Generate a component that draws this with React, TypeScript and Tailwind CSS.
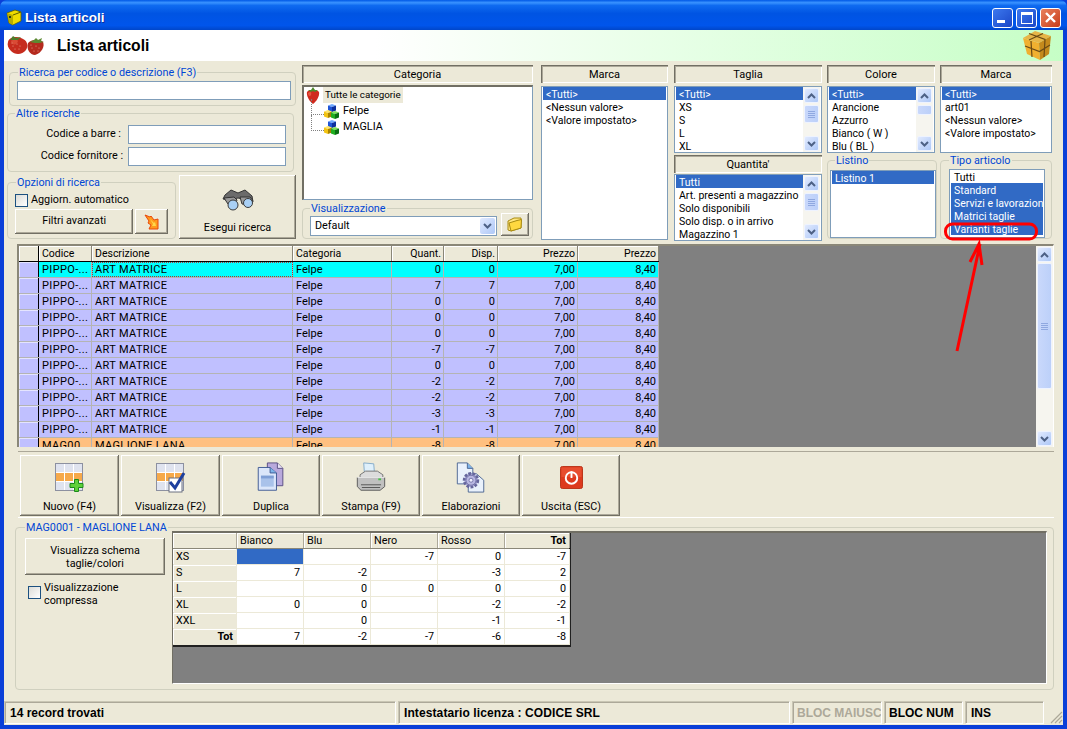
import React from "react";

const raised = "shadow-[inset_-1px_-1px_0_#716f64,inset_1px_1px_0_#fff,inset_-2px_-2px_0_#aca899]";
const headBevel = "shadow-[inset_1px_1px_0_#716f64,inset_2px_2px_0_#aca899,inset_-1px_-1px_0_#fff]";

function Group({ title, className, legendClass, children }: { title: string; className: string; legendClass?: string; children?: React.ReactNode }) {
  return (
    <div className={"relative border border-[#d0d0bf] rounded-[4px] " + className}>
      <span className={"absolute -top-[7px] bg-[#ece9d8] px-px text-[#0046d5] text-[10.8px] leading-[14px] whitespace-nowrap " + (legendClass ?? "left-[8px]")}>{title}</span>
      {children}
    </div>
  );
}

function Head({ label, className }: { label: string; className: string }) {
  return <div className={"h-[18px] pt-[2px] flex items-center justify-center text-[11px] leading-[14px] " + headBevel + " " + className}>{label}</div>;
}

function Chevron({ up }: { up?: boolean }) {
  return (
    <svg width="9" height="6" viewBox="0 0 9 6">
      <path d={up ? "M1 5L4.5 1.5L8 5" : "M1 1L4.5 4.5L8 1"} fill="none" stroke="#4d6185" strokeWidth="2" />
    </svg>
  );
}

function SBtn({ up }: { up?: boolean }) {
  return (
    <div className="w-[15px] h-[15px] shrink-0 rounded-[2px] border border-[#eef3ff] bg-linear-to-br from-[#e1eafe] to-[#aec8f7] flex items-center justify-center">
      <Chevron up={up} />
    </div>
  );
}

function VScroll({ thumb, gap = "mt-[1px]", grip = true }: { thumb: string; gap?: string; grip?: boolean }) {
  return (
    <div className="w-[17px] h-full shrink-0 bg-[#f6f5ef] flex flex-col items-center py-px">
      <SBtn up />
      <div className={"w-[15px] shrink-0 rounded-[2px] border border-[#eef3ff] bg-linear-to-r from-[#c9d8fb] to-[#bcd0f9] flex flex-col gap-px items-center justify-center " + thumb + " " + gap}>
        {grip && (
          <>
            <span className="w-[7px] h-px bg-[#8fa8e0]" />
            <span className="w-[7px] h-px bg-[#8fa8e0]" />
            <span className="w-[7px] h-px bg-[#8fa8e0]" />
            <span className="w-[7px] h-px bg-[#8fa8e0]" />
          </>
        )}
      </div>
      <div className="flex-1" />
      <SBtn />
    </div>
  );
}

function ListItems({ items, selected, pad = "pl-[3px]" }: { items: string[]; selected: number[]; pad?: string }) {
  return (
    <div className="flex-1 min-w-0 overflow-hidden">
      {items.map((t, i) => (
        <div key={i} className={"h-[13px] pt-[2px] leading-[12px] text-[10.5px] whitespace-nowrap overflow-hidden " + pad + " " + (selected.includes(i) ? "bg-[#316ac5] text-white" : "")}>{t}</div>
      ))}
    </div>
  );
}

function ListBox({ items, className, scroll, selected = [0] }: { items: string[]; className: string; scroll?: React.ReactNode; selected?: number[] }) {
  return (
    <div className={"border border-[#7f9db9] bg-white flex px-px overflow-hidden " + className}>
      <ListItems items={items} selected={selected} />
      {scroll}
    </div>
  );
}

function IsoCube({ x, y, top, left, right }: { x: number; y: number; top: string; left: string; right: string }) {
  return (
    <g transform={`translate(${x} ${y})`}>
      <polygon points="4,0 8,1.5 4,3 0,1.5" fill={top} />
      <polygon points="0,1.5 4,3 4,8 0,6.5" fill={left} />
      <polygon points="4,3 8,1.5 8,6.5 4,8" fill={right} />
    </g>
  );
}

function CubesIcon() {
  return (
    <svg width="15" height="15" viewBox="0 0 15 15" className="shrink-0">
      <IsoCube x={4} y={0} top="#6fa8ff" left="#1f55d6" right="#0c2f9c" />
      <IsoCube x={0} y={6} top="#ffe668" left="#f2c313" right="#a98300" />
      <IsoCube x={7} y={7} top="#7fe05a" left="#1fae1f" right="#0a6f12" />
    </svg>
  );
}

function Seeds() {
  return (
    <g fill="#f0a890">
      <circle cx="6" cy="10" r=".55" /><circle cx="10" cy="8" r=".55" /><circle cx="13" cy="10" r=".55" />
      <circle cx="8" cy="13" r=".55" /><circle cx="12" cy="13" r=".55" /><circle cx="5" cy="7" r=".55" />
    </g>
  );
}

function HeaderBerries() {
  return (
    <svg width="38" height="20" viewBox="0 0 38 20" className="ml-[3px] shrink-0">
      <g transform="translate(19 2)">
        <path d="M2 5C6 1 14 1 17 4C19 8 16 15 9 17C4 17 0 11 2 5Z" fill="#b52a1e" />
        <path d="M4 4L8 2L10 0L12 2L16 0L15 3L18 4L13 5L9 5Z" fill="#5c8a32" />
        <Seeds />
      </g>
      <g>
        <path d="M1 6C2 1 9 0 14 2C20 4 22 9 19 14C15 19 8 19 4 15C1 12 0 9 1 6Z" fill="#c62c1e" />
        <path d="M4 5C6 3 10 3 11 5C10 9 5 10 4 5Z" fill="#e0563e" opacity=".75" />
        <path d="M3 4L6 0L9 2L14 1L11 4L7 4Z" fill="#4f7d2b" />
        <Seeds />
      </g>
    </svg>
  );
}

function TreeBerry() {
  return (
    <svg width="14" height="17" viewBox="0 0 14 17" className="ml-px shrink-0">
      <path d="M1 5C3 2 11 2 13 5C14 9 10 15 7 17C4 15 0 9 1 5Z" fill="#cf2a1e" />
      <path d="M2 6C4 4 6 5 5 8C4 10 2 9 2 6Z" fill="#ee6a50" opacity=".7" />
      <path d="M2 3L5 3L7 0L9 3L12 3L9 5L7 4L5 5Z" fill="#4f8a2b" />
    </svg>
  );
}

function GridIcon({ children }: { children?: React.ReactNode }) {
  return (
    <svg width="30" height="30" viewBox="0 0 30 30">
      <rect x="0.5" y="0.5" width="27" height="27" fill="#dfe3ef" stroke="#8c90a0" />
      <rect x="1" y="10" width="26" height="9" fill="#f6a94a" />
      <path d="M9.5 1V27M18.5 1V27M1 9.5H27M1 18.5H27" stroke="#fff" strokeWidth="1" />
      {children}
    </svg>
  );
}

const icons: Record<string, React.ReactNode> = {
  nuovo: (
    <GridIcon>
      <path d="M19.5 16.5h4v4h4.5v4h-4.5v4h-4v-4h-4.5v-4h4.5z" fill="#5fd13a" stroke="#1c8a1c" />
    </GridIcon>
  ),
  visual: (
    <GridIcon>
      <rect x="13" y="15" width="13" height="14" fill="#fff" stroke="#6b7080" />
      <path d="M14 19L19 25L28 10" fill="none" stroke="#1d3f9e" strokeWidth="3" />
    </GridIcon>
  ),
  duplica: (
    <svg width="28" height="31" viewBox="0 0 30 34">
      <path d="M11 1H22L28 7V26H11Z" fill="#b9a9dc" stroke="#54497f" />
      <path d="M22 1V7H28" fill="#e8e2f6" stroke="#54497f" />
      <path d="M1 6H14L21 12V31H1Z" fill="#dbe6fa" stroke="#39558f" />
      <path d="M14 6V12H21" fill="#7eb4ea" stroke="#39558f" />
      <rect x="4" y="15" width="14" height="12" fill="#a9c2ea" />
      <rect x="4" y="15" width="14" height="3" fill="#7f9fd6" />
    </svg>
  ),
  stampa: (
    <svg width="32" height="31" viewBox="0 0 32 34">
      <path d="M8 1L19 2L20 15H9Z" fill="#dff0fb" stroke="#7fa8c8" />
      <path d="M4 14L10 10H23L29 14V26H4Z" fill="#dcdcdc" stroke="#6e6e6e" />
      <path d="M1 17H31V27L26 31H5L1 27Z" fill="#c0c0c0" stroke="#555" />
      <path d="M5 25H27M6 28H26" stroke="#4e4e4e" />
      <path d="M1 17H31" stroke="#f1f1f1" />
      <rect x="24" y="18" width="3" height="2" fill="#46c146" />
    </svg>
  ),
  elabora: (
    <svg width="30" height="31" viewBox="0 0 32 34">
      <path d="M1 1H12L18 7V24H1Z" fill="#e9f1fc" stroke="#46628f" />
      <path d="M12 1V7H18" fill="#7eb4ea" stroke="#46628f" />
      <path d="M13 13H22L30 20V33H13Z" fill="#e9f1fc" stroke="#46628f" />
      <circle cx="16" cy="20" r="7.5" fill="#a9a8d8" stroke="#66669c" strokeWidth="3" strokeDasharray="3 1.6" />
      <circle cx="16" cy="20" r="5.5" fill="#b8b7e2" stroke="#6f6fa5" />
      <circle cx="16" cy="20" r="2.2" fill="#eef" stroke="#6f6fa5" />
    </svg>
  ),
  uscita: (
    <svg width="23" height="23" viewBox="0 0 24 24">
      <rect x="0.5" y="0.5" width="23" height="23" rx="2" fill="#dd3a1e" stroke="#b93216" />
      <rect x="1.5" y="1.5" width="21" height="10" fill="#ef5a38" opacity=".6" />
      <circle cx="12" cy="12.5" r="6" fill="none" stroke="#fff" strokeWidth="2" />
      <path d="M12 5.5V12.5" stroke="#fff" strokeWidth="2" />
    </svg>
  ),
};

function ToolBtn({ icon, label, className }: { icon: string; label: string; className: string }) {
  return (
    <div className={"h-[61px] shrink-0 flex flex-col items-center pb-[2px] leading-[14px] " + raised + " " + className}>
      <div className="h-[46px] flex items-center justify-center">{icons[icon]}</div>
      <div className="mt-auto whitespace-nowrap">{label}</div>
    </div>
  );
}

const colW = ["w-[53px]", "w-[201px]", "w-[99px]", "w-[52px]", "w-[54px]", "w-[80px]", "w-[81px]"];
const colH: [string, boolean][] = [["Codice", false], ["Descrizione", false], ["Categoria", false], ["Quant.", true], ["Disp.", true], ["Prezzo", true], ["Prezzo", true]];

type Row = [string, string, string, string, string, string, string];
const rows: Row[] = [
  ["PIPPO-...", "ART MATRICE", "Felpe", "0", "0", "7,00", "8,40"],
  ["PIPPO-...", "ART MATRICE", "Felpe", "7", "7", "7,00", "8,40"],
  ["PIPPO-...", "ART MATRICE", "Felpe", "0", "0", "7,00", "8,40"],
  ["PIPPO-...", "ART MATRICE", "Felpe", "0", "0", "7,00", "8,40"],
  ["PIPPO-...", "ART MATRICE", "Felpe", "0", "0", "7,00", "8,40"],
  ["PIPPO-...", "ART MATRICE", "Felpe", "-7", "-7", "7,00", "8,40"],
  ["PIPPO-...", "ART MATRICE", "Felpe", "0", "0", "7,00", "8,40"],
  ["PIPPO-...", "ART MATRICE", "Felpe", "-2", "-2", "7,00", "8,40"],
  ["PIPPO-...", "ART MATRICE", "Felpe", "-2", "-2", "7,00", "8,40"],
  ["PIPPO-...", "ART MATRICE", "Felpe", "-3", "-3", "7,00", "8,40"],
  ["PIPPO-...", "ART MATRICE", "Felpe", "-1", "-1", "7,00", "8,40"],
  ["MAG00", "MAGLIONE LANA", "Felpe", "-8", "-8", "7,00", "8,40"],
];

const mW = ["w-[64px]", "w-[67px]", "w-[67px]", "w-[67px]", "w-[67px]", "w-[65px]"];
const matrix: string[][] = [
  ["XS", "", "", "-7", "0", "-7"],
  ["S", "7", "-2", "", "-3", "2"],
  ["L", "", "0", "0", "0", "0"],
  ["XL", "0", "0", "", "-2", "-2"],
  ["XXL", "", "0", "", "-1", "-1"],
  ["Tot", "7", "-2", "-7", "-6", "-8"],
];

const statusCell = "h-[23px] shrink-0 flex items-center border border-[#c9c6b4] border-b-white border-r-white shadow-[inset_1px_1px_0_#aca899] font-['Liberation_Sans',sans-serif] font-bold text-[12px] whitespace-nowrap overflow-hidden ";

export default function App() {
  return (
    <div className="relative w-[1067px] h-[729px] overflow-hidden bg-[#0a3fd8] font-['Roboto',sans-serif] text-[10.8px] text-black flex flex-col">
      {/* Title bar */}
      <div className="h-[30px] shrink-0 flex items-center pl-[6px] pr-[6px] pt-[5px] rounded-t-[7px] bg-[linear-gradient(180deg,#0058e6_0%,#3a93ff_9%,#0f6bf0_18%,#0054e3_45%,#0055eb_85%,#0046c9_100%)]">
        <svg width="16" height="17" viewBox="0 0 16 17" className="shrink-0">
          <polygon points="1,4 9,1 15,3 15,12 7,16 3,14" fill="#f0dc00" stroke="#5c5c00" strokeWidth=".8" />
          <polygon points="1,4 7,6 7,16 3,14" fill="#b8ac00" />
          <path d="M7 6L15 3" stroke="#5c5c00" />
          <rect x="3" y="7" width="2" height="2" fill="#2a3a10" />
        </svg>
        <span className="ml-[3px] text-white font-['Liberation_Sans',sans-serif] font-bold text-[13.5px] leading-none [text-shadow:1px_1px_0_#0a2fa0]">Lista articoli</span>
        <div className="ml-auto flex items-center gap-[3px]">
          <div className="w-[21px] h-[20px] rounded-[3px] border border-white bg-linear-to-br from-[#3d78ee] to-[#1c46c8] flex items-end pl-[4px] pb-[4px]">
            <span className="w-[8px] h-[3px] bg-white" />
          </div>
          <div className="w-[21px] h-[20px] rounded-[3px] border border-white bg-linear-to-br from-[#3d78ee] to-[#1c46c8] flex items-center justify-center">
            <span className="w-[12px] h-[12px] border border-white border-t-[3px]" />
          </div>
          <div className="w-[21px] h-[20px] rounded-[3px] border border-white bg-linear-to-br from-[#e8805c] to-[#c83a14] flex items-center justify-center">
            <svg width="13" height="13" viewBox="0 0 13 13"><path d="M2 2L11 11M11 2L2 11" stroke="#fff" strokeWidth="2.4" /></svg>
          </div>
        </div>
      </div>

      {/* Client */}
      <div className="h-[695px] shrink-0 mx-[4px] bg-[#ece9d8] flex flex-col">
        {/* Header strip */}
        <div className="h-[31px] shrink-0 flex items-center bg-linear-to-r from-white from-[35%] to-[#c6fec6]">
          <HeaderBerries />
          <span className="ml-[12px] font-['Liberation_Sans',sans-serif] font-bold text-[15.7px] leading-none">Lista articoli</span>
          <svg width="31" height="31" viewBox="0 0 31 31" className="ml-auto mr-[10px] shrink-0">
            <polygon points="13,1 29,6 17,13 1,8" fill="#e6b548" />
            <polygon points="1,8 17,13 18,30 5,24" fill="#f0b030" />
            <polygon points="17,13 29,6 27,24 18,30" fill="#c48a1c" />
            <path d="M7 3.5L23 9.5L22 27M9 11L10 27M3 16L17.5 21.5L28 15M21 3.5L7 10" fill="none" stroke="#6a4a14" strokeWidth="1.2" />
          </svg>
        </div>

        {/* Filters */}
        <div className="h-[182px] shrink-0 flex">
          {/* Left column */}
          <div className="w-[293px] ml-[3px] shrink-0 flex flex-col">
            <Group title="Ricerca per codice o descrizione (F3)" className="mt-[11px] ml-[2px] w-[287px] h-[34px] px-[7px] pt-[8px]" legendClass="left-[8px]">
              <div className="h-[19px] w-[274px] border border-[#7f9db9] bg-white" />
            </Group>
            <Group title="Altre ricerche" className="mt-[7px] w-[287px] h-[59px] pt-[11px]" legendClass="left-[7px]">
              <div className="flex flex-col gap-[3px]">
                <div className="flex items-center h-[19px]">
                  <span className="w-[114px] text-right pr-[1px] whitespace-nowrap">Codice a barre :</span>
                  <div className="ml-[6px] w-[158px] h-[19px] border border-[#7f9db9] bg-white" />
                </div>
                <div className="flex items-center h-[19px]">
                  <span className="w-[116px] text-right pr-[1px] whitespace-nowrap">Codice fornitore :</span>
                  <div className="ml-[4px] w-[158px] h-[19px] border border-[#7f9db9] bg-white" />
                </div>
              </div>
            </Group>
            <div className="mt-[3px] flex items-end">
              <Group title="Opzioni di ricerca" className="w-[169px] h-[57px] px-[7px] pt-[10px]" legendClass="left-[8px]">
                <div className="flex items-center h-[14px]">
                  <span className="w-[13px] h-[13px] border border-[#1c5180] bg-linear-to-br from-[#dcdcd7] to-white" />
                  <span className="ml-[3px] whitespace-nowrap">Aggiorn. automatico</span>
                </div>
                <div className="flex gap-[2px] mt-[2px]">
                  <div className={"w-[120px] h-[25px] flex items-center justify-center " + raised}>Filtri avanzati</div>
                  <div className={"w-[33px] h-[25px] flex items-center justify-center " + raised}>
                    <svg width="16" height="16" viewBox="0 0 16 16">
                      <path d="M1 1L6 3L7 2L10 6L14 5L14 15L5 15L7 11L4 9L5 7Z" fill="#ff9a1c" stroke="#e8480c" strokeWidth="1" />
                      <path d="M6 5L10 9L11 8L12 12L8 12L9 10Z" fill="#ffd84a" />
                    </svg>
                  </div>
                </div>
              </Group>
              <div className={"ml-[3px] w-[117px] h-[64px] flex flex-col items-center pb-[3px] " + raised}>
                <svg width="32" height="22" viewBox="0 0 32 22" className="mt-[14px]">
                  <path d="M3 6L9 1L16 4L23 1L30 7L31 13L26 11L16 9L7 11L1 10Z" fill="#6b6b6b" stroke="#333" />
                  <path d="M2 9L12 8L15 11L13 17L6 15Z" fill="#9a9a9a" stroke="#333" />
                  <path d="M18 8L28 8L31 12L27 16L20 15Z" fill="#9a9a9a" stroke="#333" />
                  <ellipse cx="11" cy="16" rx="5" ry="5" fill="#a9d0f5" stroke="#3a3a3a" />
                  <ellipse cx="26" cy="14" rx="4.5" ry="4.5" fill="#a9d0f5" stroke="#3a3a3a" />
                </svg>
                <span className="mt-auto">Esegui ricerca</span>
              </div>
            </div>
          </div>

          {/* Category column */}
          <div className="ml-[2px] w-[231px] shrink-0 flex flex-col pt-[4px]">
            <Head label="Categoria" className="w-full" />
            <div className="mt-[2px] h-[115px] border border-[#7f9db9] border-t-[#716f64] border-l-[#716f64] border-t-2 border-l-2 bg-white pl-px">
              <div className="flex items-start h-[16px]">
                <TreeBerry />
                <span className="ml-[3px] h-[16px] px-[2px] bg-[#ece9d8] text-[9.8px] leading-[16px] whitespace-nowrap">Tutte le categorie</span>
              </div>
              <div className="flex items-center h-[16px] pl-[6px]">
                <span className="w-[13px] h-[16px] -mt-[8px] border-l border-b border-dotted border-[#808080]" />
                <CubesIcon />
                <span className="ml-[4px]">Felpe</span>
              </div>
              <div className="flex items-center h-[16px] pl-[6px]">
                <span className="w-[13px] h-[16px] -mt-[8px] border-l border-b border-dotted border-[#808080]" />
                <CubesIcon />
                <span className="ml-[4px]">MAGLIA</span>
              </div>
            </div>
            <Group title="Visualizzazione" className="mt-[8px] h-[31px] flex items-center pl-[7px]" legendClass="left-[7px]">
              <div className="w-[187px] h-[20px] mt-[5px] border border-[#7f9db9] bg-white flex items-center pl-[4px]">
                <span>Default</span>
                <div className="ml-auto mr-px w-[15px] h-[16px] rounded-[2px] bg-linear-to-br from-[#e1eafe] to-[#aec8f7] flex items-center justify-center"><Chevron /></div>
              </div>
              <div className={"ml-[4px] mt-[2px] w-[28px] h-[23px] flex items-center justify-center " + raised}>
                <svg width="16" height="15" viewBox="0 0 16 15">
                  <path d="M1 4L7 1H14V11L4 14L1 13Z" fill="#ffe680" stroke="#a88a10" />
                  <path d="M2 6L10 3.5L14.5 2.5L14 11L4 14Z" fill="#ffd840" stroke="#a88a10" />
                </svg>
              </div>
            </Group>
          </div>

          {/* Marca */}
          <div className="ml-[8px] w-[127px] shrink-0 flex flex-col pt-[4px]">
            <Head label="Marca" className="w-full" />
            <ListBox className="mt-[3px] h-[154px]" items={["<Tutti>", "<Nessun valore>", "<Valore impostato>"]} />
          </div>

          {/* Taglia + Quantita */}
          <div className="ml-[6px] w-[148px] shrink-0 flex flex-col pt-[4px]">
            <Head label="Taglia" className="w-full" />
            <ListBox className="mt-[3px] h-[67px]" items={["<Tutti>", "XS", "S", "L", "XL"]} scroll={<VScroll thumb="h-[18px]" gap="mt-[2px]" />} />
            <Head label="Quantita'" className="w-full mt-[2px]" />
            <ListBox className="mt-px h-[67px]" items={["Tutti", "Art. presenti a magazzino", "Solo disponibili", "Solo disp. o in arrivo", "Magazzino 1"]} scroll={<VScroll thumb="h-[18px]" gap="mt-[2px]" />} />
          </div>

          {/* Colore + Listino */}
          <div className="ml-[5px] w-[108px] shrink-0 flex flex-col pt-[4px]">
            <Head label="Colore" className="w-full" />
            <ListBox className="mt-[3px] h-[67px]" items={["<Tutti>", "Arancione", "Azzurro", "Bianco ( W )", "Blu ( BL )"]} scroll={<VScroll thumb="h-[10px]" gap="mt-[2px]" grip={false} />} />
            <Group title="Listino" className="mt-[7px] h-[79px] pl-[2px] pr-[1px] pt-[9px] w-[110px]" legendClass="left-[7px]">
              <ListBox className="h-[68px] w-[106px]" items={["Listino 1"]} />
            </Group>
          </div>

          {/* Marca 2 + Tipo */}
          <div className="ml-[5px] w-[112px] shrink-0 flex flex-col pt-[4px]">
            <Head label="Marca" className="w-full" />
            <ListBox className="mt-[3px] h-[67px]" items={["<Tutti>", "art01", "<Nessun valore>", "<Valore impostato>"]} />
            <Group title="Tipo articolo" className="mt-[7px] h-[79px] pl-[8px] pt-[8px]" legendClass="left-[8px]">
              <ListBox className="h-[69px] w-[96px]" selected={[1, 2, 3, 4]} items={["Tutti", "Standard", "Servizi e lavorazioni", "Matrici taglie", "Varianti taglie"]} />
            </Group>
          </div>
        </div>

        {/* Records grid */}
        <div className="ml-[13px] mt-px w-[1037px] h-[203px] shrink-0 flex border-t-2 border-l-2 border-t-[#8a8778] border-l-[#8a8778] border-r border-r-white bg-[#808080] overflow-hidden">
          <div className="w-[640px] shrink-0 flex flex-col">
            <div className="h-[16px] shrink-0 flex border-b border-black bg-[#ece9d8]">
              <div className="w-[20px] shrink-0 border-r border-black shadow-[inset_1px_1px_0_#fff]" />
              {colH.map(([t, r], i) => (
                <div key={i} className={colW[i] + " shrink-0 leading-[15px] text-[10.5px] px-[3px] border-r border-[#8a8778] shadow-[inset_1px_1px_0_#fff] " + (r ? "text-right pr-[2px]" : "")}>{t}</div>
              ))}
            </div>
            {rows.map((row, ri) => {
              const bg = ri === 0 ? "bg-[#00ffff]" : ri === 11 ? "bg-[#ffc080]" : "bg-[#c0c0ff]";
              return (
                <div key={ri} className={"h-[16px] shrink-0 flex border-b border-[#b4b4b4] " + bg}>
                  <div className="w-[20px] shrink-0 border-r border-black bg-[#c0c0ff] shadow-[inset_1px_1px_0_#e4e4ff]" />
                  {row.map((c, i) => (
                    <div key={i} className={colW[i] + " shrink-0 leading-[15px] text-[11px] px-[3px] whitespace-nowrap overflow-hidden border-r border-[#b4b4b4] " + (i > 2 ? "text-right pr-[2px] " : "") + (i < 2 ? "tracking-[0.35px] " : "") + (ri === 0 && i === 1 ? "outline-1 outline-dotted -outline-offset-1 outline-[#b03030]" : "")}>{c}</div>
                  ))}
                </div>
              );
            })}
          </div>
          <div className="flex-1" />
          <VScroll thumb="h-[126px]" />
        </div>

        {/* Toolbar */}
        <div className="ml-[14px] mt-[4px] w-[1036px] h-[67px] shrink-0 border-t border-[#aca899] border-b border-b-[#fff] pt-[3px] pl-[2px] flex gap-[2px]">
          <ToolBtn icon="nuovo" label="Nuovo (F4)" className="w-[99px]" />
          <ToolBtn icon="visual" label="Visualizza (F2)" className="w-[99px]" />
          <ToolBtn icon="duplica" label="Duplica" className="w-[98px]" />
          <ToolBtn icon="stampa" label="Stampa (F9)" className="w-[98px]" />
          <ToolBtn icon="elabora" label="Elaborazioni" className="w-[98px]" />
          <ToolBtn icon="uscita" label="Uscita (ESC)" className="w-[98px]" />
        </div>

        {/* Detail group */}
        <Group title="MAG0001 - MAGLIONE LANA" className="ml-[11px] mt-[9px] w-[1039px] h-[163px] shrink-0 flex" legendClass="left-[9px]">
          <div className="w-[156px] shrink-0 pl-[9px] pt-[10px]">
            <div className={"w-[140px] h-[37px] flex items-center justify-center text-center leading-[13px] " + raised}>Visualizza schema<br />taglie/colori</div>
            <div className="flex mt-[6px] ml-[3px] leading-[13px]">
              <span className="mt-[5px] w-[13px] h-[13px] border border-[#1c5180] bg-linear-to-br from-[#dcdcd7] to-white shrink-0" />
              <span className="ml-[3px]">Visualizzazione<br />compressa</span>
            </div>
          </div>
          <div className="mt-[3px] w-[875px] h-[153px] border-t-2 border-l border-t-[#716f64] border-l-[#716f64] border-b border-r border-b-white border-r-white bg-[#808080]">
            <div className="w-[398px] border-r-2 border-b-2 border-[#202020] bg-white">
              <div className="flex h-[16px] bg-[#ece9d8] border-b border-[#8a8778]">
                {["", "Bianco", "Blu", "Nero", "Rosso", "Tot"].map((t, i) => (
                  <div key={i} className={mW[i] + " shrink-0 px-[3px] leading-[15px] border-r border-[#aca899] shadow-[inset_1px_1px_0_#fff] " + (i === 5 ? "text-right font-bold" : "")}>{t}</div>
                ))}
              </div>
              {matrix.map((row, ri) => (
                <div key={ri} className="flex h-[16px]">
                  {row.map((c, ci) => (
                    <div
                      key={ci}
                      className={
                        mW[ci] + " shrink-0 px-[3px] leading-[15px] border-b border-r border-[#ece9d8] " +
                        (ci === 0 ? "bg-[#ece9d8] border-[#aca899] shadow-[inset_1px_1px_0_#fff] " : "text-right ") +
                        (ci === 0 && ri === 5 ? "text-right font-bold " : "") +
                        (ri === 0 && ci === 1 ? "bg-[#316ac5]" : "")
                      }
                    >
                      {c}
                    </div>
                  ))}
                </div>
              ))}
            </div>
          </div>
        </Group>

        {/* Status bar */}
        <div className="mt-auto mb-[1px] h-[23px] shrink-0 flex">
          <div className={statusCell + "w-[392px] pl-[5px]"}>14 record trovati</div>
          <div className={statusCell + "ml-[2px] w-[392px] pl-[5px] tracking-[0.1px]"}>Intestatario licenza : CODICE SRL</div>
          <div className={statusCell + "ml-[2px] w-[90px] pl-[4px] text-[#aca899]"}>BLOC MAIUSC</div>
          <div className={statusCell + "ml-[2px] w-[79px] pl-[4px]"}>BLOC NUM</div>
          <div className={statusCell + "ml-[2px] w-[79px] pl-[5px]"}>INS</div>
          <svg width="15" height="15" viewBox="0 0 15 15" className="ml-auto mt-auto shrink-0">
            <path d="M14 3L3 14M14 7L7 14M14 11L11 14" stroke="#aca899" strokeWidth="1.2" />
          </svg>
        </div>
      </div>

      {/* Red annotation over the screenshot */}
      <svg className="absolute left-0 top-0 pointer-events-none" width="1067" height="729" viewBox="0 0 1067 729">
        <rect x="945.5" y="224" width="91" height="15" rx="7" fill="none" stroke="#ff0000" strokeWidth="3" />
        <path d="M957 351L980 244M970 262L979 244L982 265" fill="none" stroke="#ff0000" strokeWidth="3" />
      </svg>
    </div>
  );
}
